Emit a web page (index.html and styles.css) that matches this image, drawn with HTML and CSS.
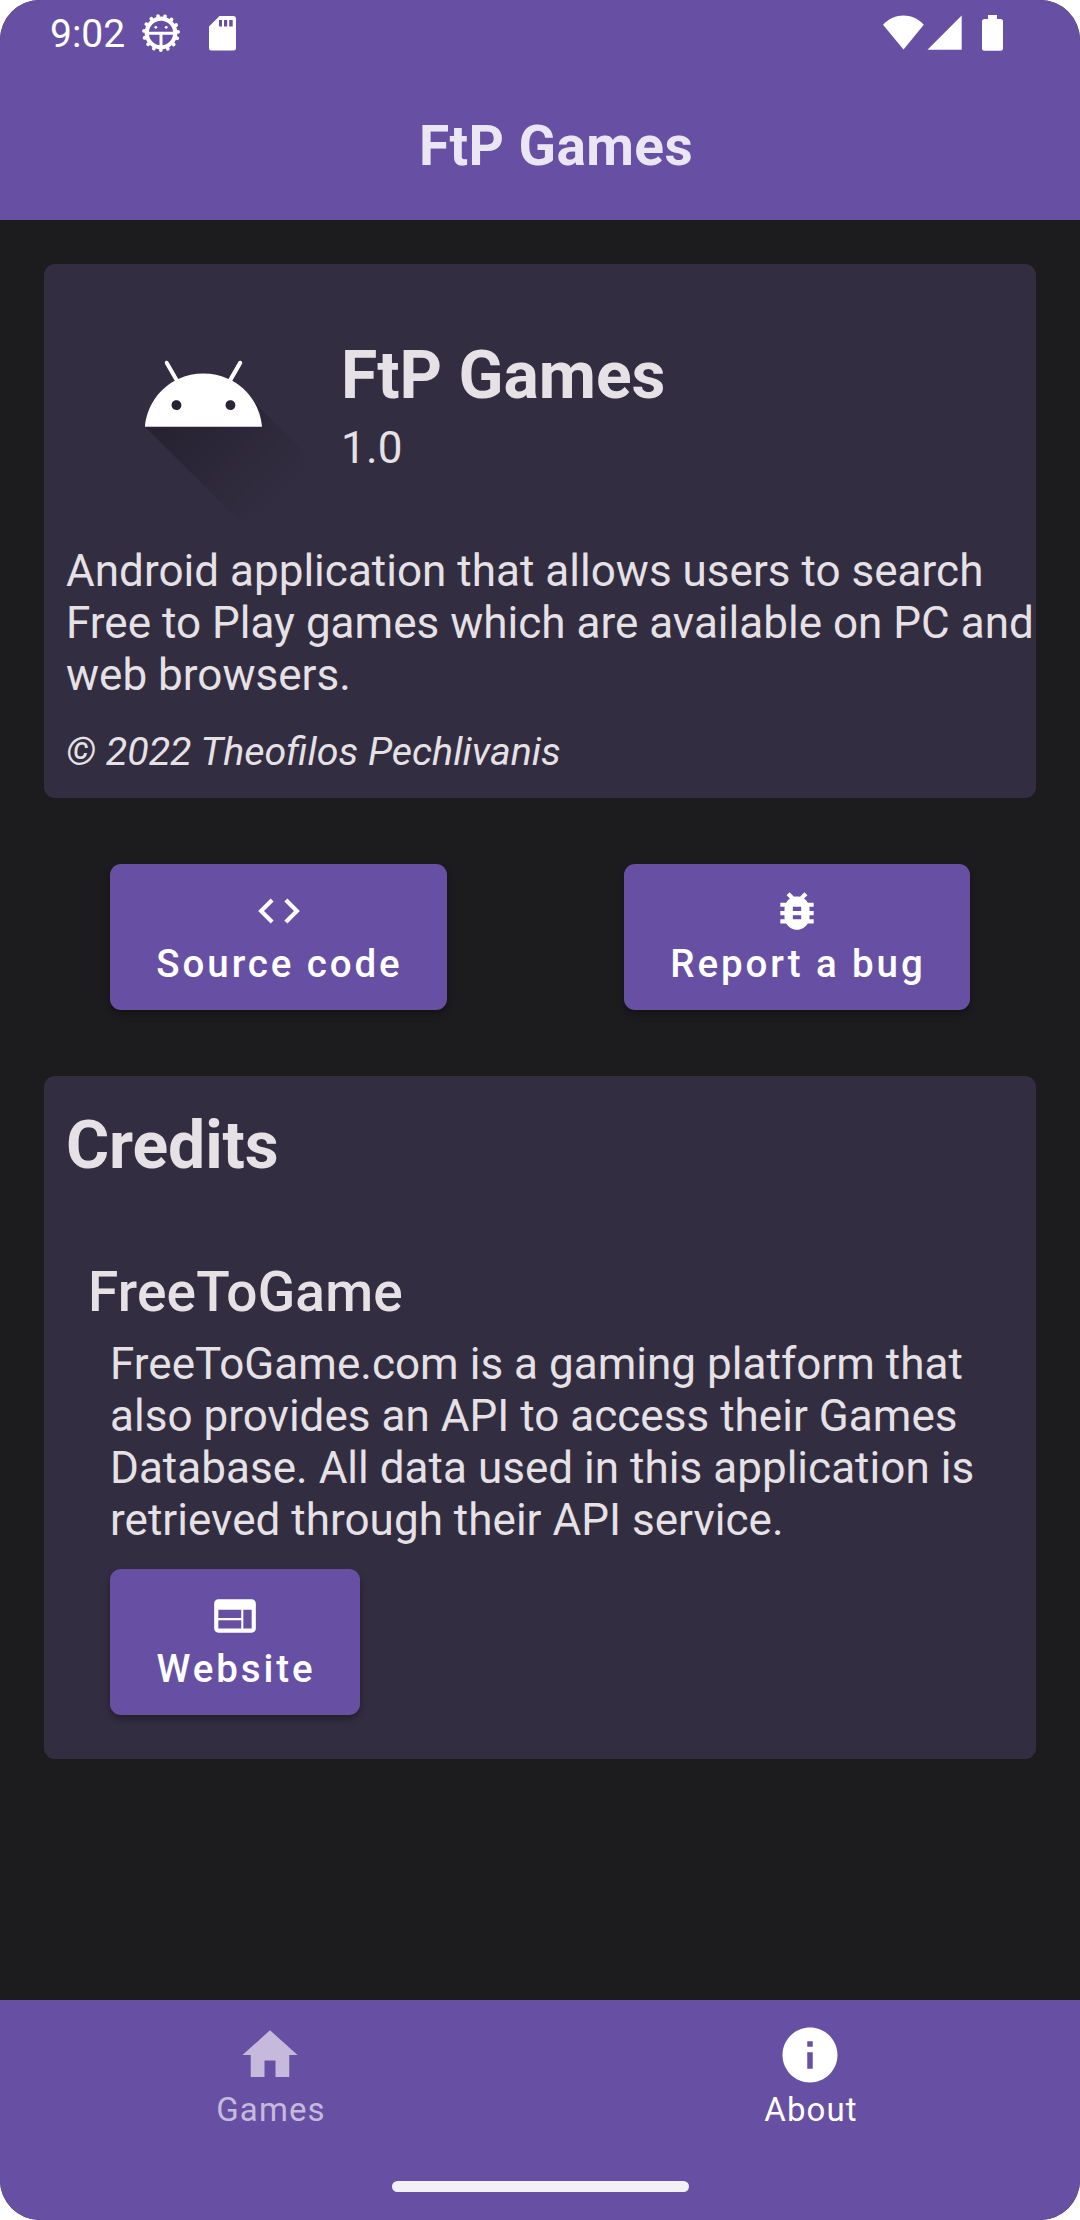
FILE: index.html
```html
<!DOCTYPE html>
<html lang="en">
<head>
<meta charset="utf-8">
<title>FtP Games</title>
<link rel="stylesheet" href="styles.css">
</head>
<body>
<div class="screen">
  <header class="top">
    <div class="status">
      <div class="status-left">
        <span class="clock">9:02</span>
        <svg class="gear" viewBox="0 0 40 40" width="40" height="40">
          <circle cx="20" cy="20" r="14.300" fill="none" stroke="#fff" stroke-width="4.200"/>
          <circle cx="20" cy="20" r="17.100" fill="none" stroke="#fff" stroke-width="3.800" stroke-linecap="round" stroke-dasharray="0.010 7.153" stroke-dashoffset="-5.370"/>
          <path d="M7 20.200h26M20 20v13.500" stroke="#fff" stroke-width="3"/>
          <circle cx="14.800" cy="14.300" r="1.400" fill="#fff"/><circle cx="25.200" cy="14.300" r="1.400" fill="#fff"/>
        </svg>
        <svg class="sdcard" viewBox="0 0 27 35" width="27" height="35">
          <path fill="#fff" fill-rule="evenodd" d="M10.500 0H24q3 0 3 3v29q0 2.500-2.500 2.500h-22Q0 34.500 0 32V10.500zM10 4v6.600h3V4zM15 4v6.600h3.200V4zM20.200 4v6.600h3.500V4z"/>
        </svg>
      </div>
      <div class="status-right">
        <svg viewBox="0 0 42 36" width="42" height="36"><path fill="#fff" d="M0 9.700C11.500-2.600 29.500-2.600 40.800 9.700L20.500 34.500z"/></svg>
        <svg class="signal" viewBox="0 0 35 36" width="35" height="36"><path fill="#fff" d="M34.700.500v34.300H.5z"/></svg>
        <svg class="battery" viewBox="0 0 21 36" width="21" height="36"><path fill="#fff" d="M6 0h9v4h3.500Q21 4 21 6.500v27q0 2.300-2.300 2.300H2.300Q0 35.800 0 33.500v-27Q0 4 2.500 4H6z"/></svg>
      </div>
    </div>
    <h1 class="title">FtP Games</h1>
  </header>

  <main class="content">
    <section class="card about">
      <div class="app">
        <svg class="logo" viewBox="0 0 108 108" width="275" height="275">
          <defs>
            <linearGradient id="fade" x1="42.949" y1="49.592" x2="85.844" y2="92.496" gradientUnits="userSpaceOnUse">
              <stop offset="0" stop-opacity=".267"/><stop offset="1" stop-opacity="0"/>
            </linearGradient>
          </defs>
          <path fill="url(#fade)" d="M31,63.928c0,0 6.400,-11 12.100,-13.100c7.200,-2.600 26,-1.400 26,-1.400l38.100,38.100L107,108.928l-32,-1L31,63.928z"/>
          <path fill="#fff" fill-rule="evenodd" d="M65.300,45.828l3.800,-6.600c0.200,-0.400 0.100,-0.900 -0.300,-1.100c-0.400,-0.200 -0.900,-0.100 -1.100,0.300l-3.900,6.700c-6.300,-2.800 -13.400,-2.800 -19.700,0l-3.900,-6.700c-0.200,-0.400 -0.700,-0.500 -1.100,-0.300C38.800,38.328 38.700,38.828 38.900,39.228l3.800,6.600C36.200,49.428 31.700,56.028 31,63.928h46C76.300,56.028 71.800,49.428 65.300,45.828zM43.400,57.328c-0.800,0 -1.500,-0.500 -1.800,-1.200c-0.300,-0.700 -0.100,-1.500 0.400,-2.100c0.500,-0.500 1.400,-0.700 2.100,-0.400c0.700,0.300 1.200,1 1.200,1.800C45.300,56.528 44.500,57.328 43.400,57.328L43.400,57.328zM64.600,57.328c-0.800,0 -1.500,-0.500 -1.800,-1.200s-0.100,-1.500 0.400,-2.100c0.500,-0.500 1.400,-0.700 2.100,-0.400c0.700,0.300 1.200,1 1.200,1.800C66.500,56.528 65.600,57.328 64.600,57.328L64.600,57.328z"/>
        </svg>
        <div class="app-text">
          <h2 class="name">FtP Games</h2>
          <div class="version">1.0</div>
        </div>
      </div>
      <p class="desc">Android application that allows users to search<br>Free to Play games which are available on PC and<br>web browsers.</p>
      <p class="copyright">© 2022 Theofilos Pechlivanis</p>
    </section>

    <div class="actions">
      <button class="btn source">
        <svg viewBox="0 0 24 24" width="50" height="50"><path fill="#fff" d="M9.400 16.600 4.800 12l4.600-4.600L8 6l-6 6 6 6 1.400-1.400zm5.200 0 4.600-4.600-4.600-4.600L16 6l6 6-6 6-1.400-1.400z"/></svg>
        <span>Source code</span>
      </button>
      <button class="btn bug">
        <svg viewBox="0 0 24 24" width="50" height="50"><path fill="#fff" d="M20 8h-2.810c-.45-.78-1.070-1.450-1.820-1.960L17 4.410 15.590 3l-2.170 2.170C12.960 5.060 12.490 5 12 5c-.49 0-.96.060-1.410.17L8.410 3 7 4.410l1.620 1.630C7.880 6.550 7.260 7.220 6.810 8H4v2h2.090c-.05.33-.09.66-.09 1v1H4v2h2v1c0 .34.040.67.090 1H4v2h2.810c1.040 1.790 2.970 3 5.190 3s4.150-1.210 5.190-3H20v-2h-2.090c.05-.33.090-.66.090-1v-1h2v-2h-2v-1c0-.34-.04-.67-.09-1H20V8zm-6 8h-4v-2h4v2zm0-4h-4v-2h4v2z"/></svg>
        <span>Report a bug</span>
      </button>
    </div>

    <section class="card credits">
      <h2 class="heading">Credits</h2>
      <h3 class="subheading">FreeToGame</h3>
      <p class="credit-text">FreeToGame.com is a gaming platform that<br>also provides an API to access their Games<br>Database. All data used in this application is<br>retrieved through their API service.</p>
      <button class="btn web">
        <svg viewBox="0 0 24 24" width="50" height="50"><path fill="#fff" fill-rule="evenodd" d="M4 4h16c1.100 0 2 .9 2 2v12c0 1.100-.9 2-2 2H4c-1.100 0-2-.9-2-2V6c0-1.100.9-2 2-2zM4 9v4h11V9zm0 5v4h11v-4zM16 9v9h4V9z"/></svg>
        <span>Website</span>
      </button>
    </section>
  </main>

  <nav class="bottom">
    <div class="tabs">
      <div class="tab inactive">
        <svg viewBox="0 0 24 24" width="66" height="66"><path fill="currentColor" d="M10 20v-6h4v6h5v-8h3L12 3 2 12h3v8z"/></svg>
        <span>Games</span>
      </div>
      <div class="tab">
        <svg viewBox="0 0 24 24" width="66" height="66"><path fill="currentColor" d="M12 2C6.480 2 2 6.480 2 12s4.480 10 10 10 10-4.480 10-10S17.520 2 12 2zm1 15h-2v-6h2v6zm0-8h-2V7h2v2z"/></svg>
        <span>About</span>
      </div>
    </div>
    <div class="handle"></div>
  </nav>
</div>
</body>
</html>
```

FILE: styles.css
```css
* { box-sizing: border-box; }
body { margin: 0; background: #fff; font-family: Roboto, "Noto Sans", sans-serif; }
h1, h2, h3, p { margin: 0; }
svg { display: block; flex: none; }

.screen {
  width: 1080px;
  height: 2220px;
  display: flex;
  flex-direction: column;
  background: #1c1c1e;
  border-radius: 40px;
  overflow: hidden;
  color: #e6e1e5;
}

.top { height: 220px; background: #6750a4; display: flex; flex-direction: column; }
.status { height: 66px; display: flex; justify-content: space-between; padding: 0 77px 0 50px; color: #fff; }
.status-left, .status-right { display: flex; align-items: flex-start; }
.clock { width: 91px; font-size: 39px; line-height: 46px; margin-top: 11px; white-space: nowrap; }
.gear { margin-top: 13px; }
.sdcard { margin: 16px 0 0 28px; }
.status-right { padding-top: 15px; }
.signal { margin-left: 2px; }
.battery { margin-left: 20px; }
.title { margin: 48px 0 0 419px; color: #ebe6f3; font-size: 55px; line-height: 64px; font-weight: 700; letter-spacing: .4px; white-space: nowrap; }

.content { flex: 1; padding: 44px 44px 0; }
.card { background: #332d41; border-radius: 11px; }
.about { height: 534px; padding-left: 22px; }
.app { height: 270px; display: flex; }
.app-text { padding-top: 73px; }
.name { font-size: 66px; line-height: 78px; font-weight: 700; white-space: nowrap; }
.version { font-size: 44px; line-height: 52px; margin-top: 7px; letter-spacing: .2px; }
.desc { padding-top: 11px; font-size: 44px; line-height: 52px; letter-spacing: .02px; white-space: nowrap; }
.copyright { margin-top: 27px; font-size: 39.400px; line-height: 48px; font-style: italic; white-space: nowrap; }

.actions { display: flex; justify-content: space-between; margin: 66px 66px; }
.btn {
  display: flex;
  flex-direction: column;
  align-items: center;
  height: 146px;
  padding: 22px 0 0;
  border: 0;
  border-radius: 11px;
  background: #6750a4;
  box-shadow: 0 4px 7px rgba(0, 0, 0, .32);
  color: #fff;
  font: 500 38.500px/45px Roboto, sans-serif;
  letter-spacing: 2.900px;
  white-space: nowrap;
}
.btn span { margin-top: 5px; padding-left: 2px; }
.source { width: 337px; }
.bug { width: 346px; }
.web { width: 250px; margin: 23px 0 0 66px; }

.credits { height: 683px; padding-top: 31px; }
.heading { margin-left: 22px; font-size: 66px; line-height: 78px; font-weight: 700; letter-spacing: -.1px; }
.subheading { margin: 75px 0 0 44px; font-size: 55px; line-height: 64px; font-weight: 500; letter-spacing: .2px; }
.credit-text { margin: 14px 0 0 66px; font-size: 44px; line-height: 52px; letter-spacing: .03px; white-space: nowrap; }

.bottom { height: 220px; background: #6750a4; display: flex; flex-direction: column; align-items: center; }
.tabs { width: 100%; height: 181px; display: flex; }
.tab { flex: 1; display: flex; flex-direction: column; align-items: center; padding-top: 22px; color: #fff; font-size: 33px; line-height: 39px; letter-spacing: 1.100px; }
.tab span { margin-top: 2px; padding-left: 2px; }
.inactive { color: #c5badb; }
.handle { width: 297px; height: 11px; border-radius: 6px; background: #f3f0f8; }
```
